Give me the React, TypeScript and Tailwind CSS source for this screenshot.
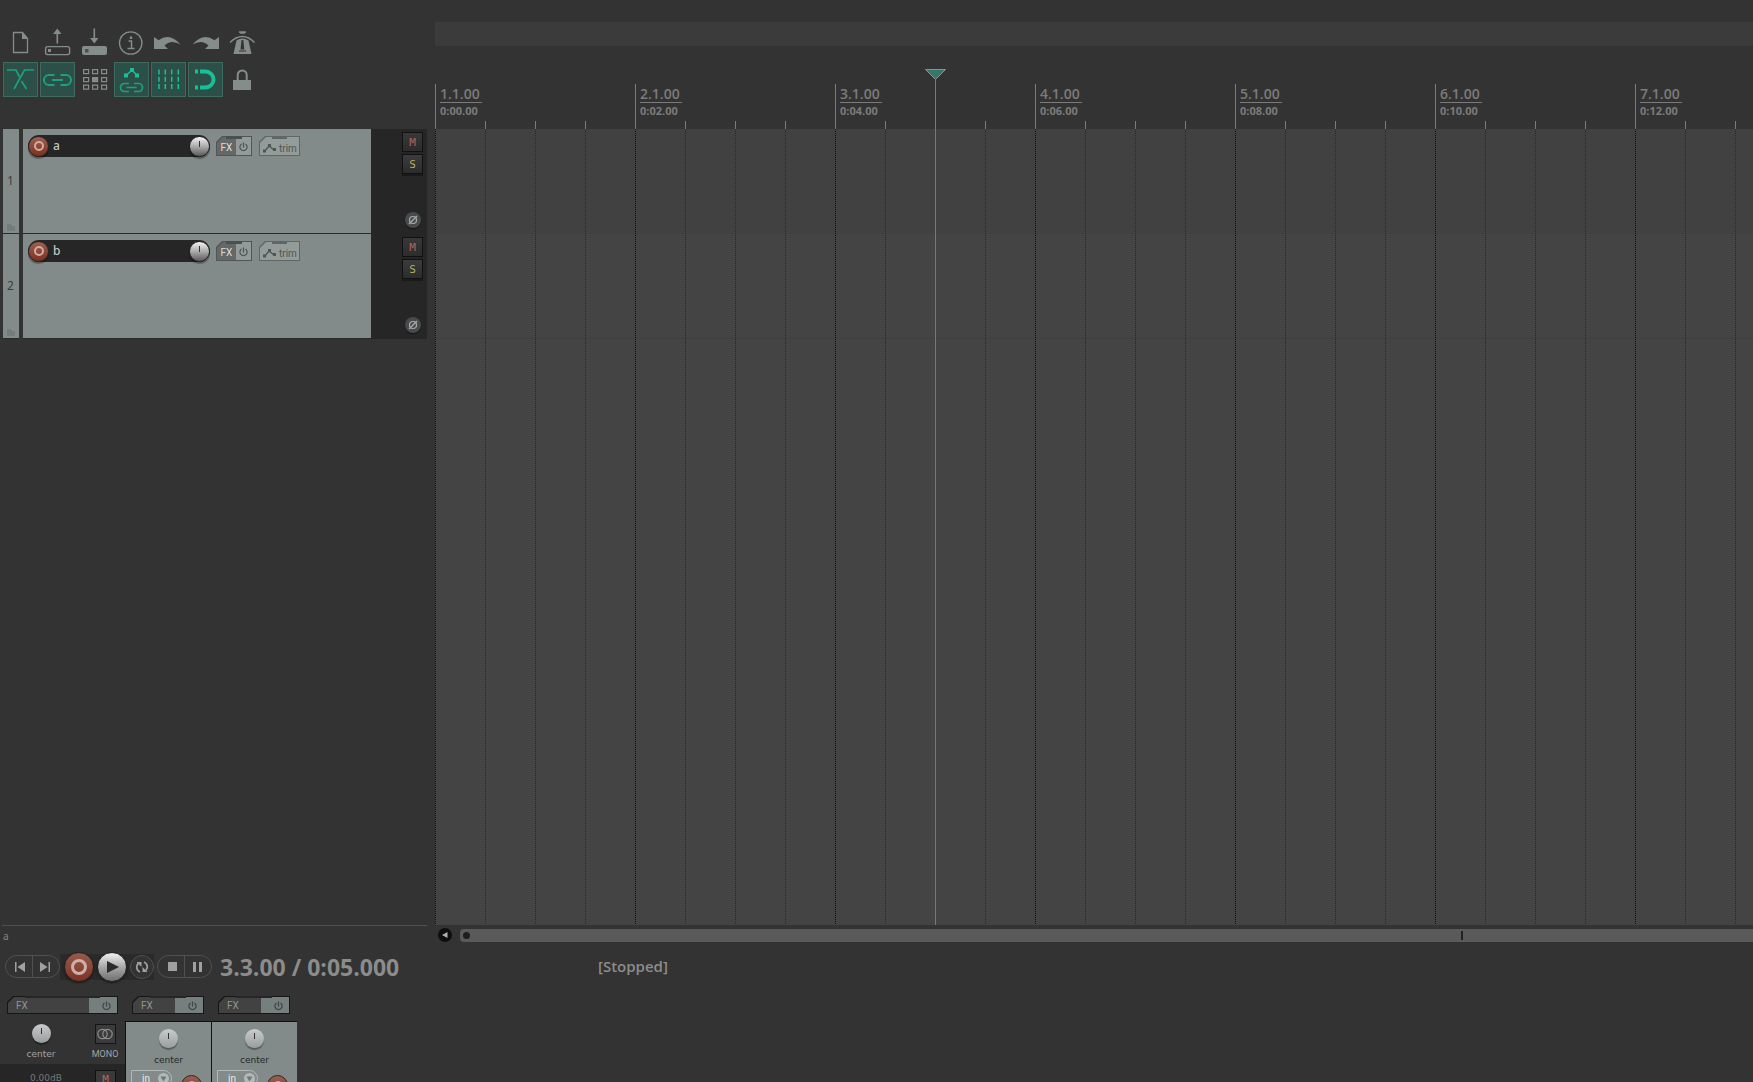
import { useState } from 'react'
import type { ReactNode } from 'react'

// ── Toolbar icons (35×35 cells) ─────────────────────────────────────────────

const ICONS: Record<string, ReactNode> = {
  new: (
    <>
      <path d="M10.500 7.500h9l5 6v14h-14z" fill="none" stroke="currentColor" strokeWidth="1.300" />
      <path d="M19 7l6 7h-6z" fill="currentColor" />
    </>
  ),
  open: (
    <>
      <path d="M17.300 3.500l4.200 5.500h-3.400v9.500h-1.600V9h-3.400z" fill="currentColor" />
      <rect x="5.600" y="21.600" width="24" height="8" rx="2" fill="none" stroke="currentColor" strokeWidth="1.400" />
      <rect x="8" y="24" width="3" height="3" fill="currentColor" />
    </>
  ),
  save: (
    <>
      <path d="M17.300 18.500l4.200-5.500h-3.400V3.500h-1.600V13h-3.400z" fill="currentColor" />
      <rect x="5" y="21" width="25" height="9" rx="2" fill="currentColor" />
      <rect x="8" y="24" width="3.500" height="3.500" fill="#4b5150" />
    </>
  ),
  info: (
    <>
      <circle cx="16.700" cy="18" r="11.200" fill="none" stroke="currentColor" strokeWidth="1.300" />
      <path d="M14.500 16h3v7.500M13.500 23.500h7" fill="none" stroke="currentColor" strokeWidth="1.500" />
      <rect x="15.800" y="11.500" width="2.400" height="2.400" fill="currentColor" />
    </>
  ),
  undo: <path d="M3 12l4.500 3.200Q19 7 29.500 19.500Q20 14 13.500 20.500L17 24H3z" fill="currentColor" />,
  redo: <path d="M31 12l-4.500 3.200Q15 7 4.500 19.500Q14 14 20.500 20.500L17 24H31z" fill="currentColor" />,
  metronome: (
    <>
      <path d="M14 6.200h7v1.200l-1.500 1.400h-4L14 7.400z" fill="currentColor" />
      <path d="M5 17.500Q11 11.500 17.300 11.500T29.500 17.500" fill="none" stroke="currentColor" strokeWidth="1.500" />
      <path d="M11.500 15.500Q17.300 11.500 23.500 15.500L26.500 29H8.500z" fill="currentColor" />
      <path d="M16.500 15h1.800l1 9.500h-3.800zM14 25.500h7v1h-7z" fill="#333" />
    </>
  ),
  crossfade: (
    <g fill="none" stroke="currentColor" strokeWidth="1.700">
      <path d="M4 8h9l3.500 7M18.500 19l5 8" />
      <path d="M31 8H21.500L11 27" />
    </g>
  ),
  link: (
    <g fill="none" stroke="currentColor" strokeWidth="1.900">
      <path d="M14.500 13H9a5 5 0 0 0 0 10h5.500M20.500 13H26a5 5 0 0 1 0 10h-5.500M12 18h11" />
    </g>
  ),
  matrix: (
    <g fill="none" stroke="currentColor" strokeWidth="1.200">
      <path d="M6.600 7.600h5v4h-5zM15.600 7.600h5v4h-5zM24.600 7.600h5v4h-5zM6.600 15.600h5v4h-5zM24.600 15.600h5v4h-5zM6.600 23.100h5v4h-5zM15.600 23.100h5v4h-5zM24.600 23.100h5v4h-5z" />
      <path d="M15.600 15.600h5v4h-5z" fill="currentColor" />
    </g>
  ),
  envelope: (
    <>
      <path d="M12 13.500L18 8l5 5.500" fill="none" stroke="#17c09a" strokeWidth="1.500" />
      <path d="M10 11.500h4v4h-4zM16 6h4v4h-4zM21 11.500h4v4h-4z" fill="#17c09a" />
      <path
        d="M15 21.500H10.500a4 4 0 0 0 0 8H15M20 21.500h4.500a4 4 0 0 1 0 8H20M12.500 25.500h10"
        fill="none"
        stroke="currentColor"
        strokeWidth="1.700"
      />
    </>
  ),
  gridLines: (
    <path
      d="M8 7.500v20M14.300 7.500v20M20.700 7.500v20M27.300 7.500v20"
      stroke="#17c09a"
      strokeWidth="1.500"
      strokeDasharray="5 2.300"
    />
  ),
  snap: (
    <>
      <path d="M12 9.500h5.500a8 8 0 0 1 0 16H12" fill="none" stroke="#17c09a" strokeWidth="3.800" />
      <path d="M7 7.600h3v3.800H7zM7 23.600h3v3.800H7z" fill="#17c09a" />
    </>
  ),
  lock: (
    <>
      <rect x="8" y="18" width="18" height="10" fill="currentColor" />
      <path d="M12.700 18v-5a4.500 4.500 0 0 1 9 0v5" fill="none" stroke="currentColor" strokeWidth="2" />
    </>
  ),
}

const TOOLS = [
  { icon: 'new', label: 'New project' },
  { icon: 'open', label: 'Open project' },
  { icon: 'save', label: 'Save project' },
  { icon: 'info', label: 'Project settings' },
  { icon: 'undo', label: 'Undo' },
  { icon: 'redo', label: 'Redo' },
  { icon: 'metronome', label: 'Metronome' },
  { icon: 'crossfade', label: 'Auto-crossfade', on: true },
  { icon: 'link', label: 'Item grouping', on: true },
  { icon: 'matrix', label: 'Ripple editing' },
  { icon: 'envelope', label: 'Move envelopes with items', on: true },
  { icon: 'gridLines', label: 'Grid lines', on: true },
  { icon: 'snap', label: 'Snap', on: true },
  { icon: 'lock', label: 'Lock' },
]

const MEASURES = [
  { bar: '1.1.00', time: '0:00.00' },
  { bar: '2.1.00', time: '0:02.00' },
  { bar: '3.1.00', time: '0:04.00' },
  { bar: '4.1.00', time: '0:06.00' },
  { bar: '5.1.00', time: '0:08.00' },
  { bar: '6.1.00', time: '0:10.00' },
  { bar: '7.1.00', time: '0:12.00' },
]

function Toolbar() {
  return (
    <div className="grid grid-cols-[repeat(7,35px)] gap-[2px] pl-[3px] pt-[25px]">
      {TOOLS.map(tool => (
        <button
          key={tool.icon}
          aria-label={tool.label}
          className={
            tool.on
              ? 'size-[35px] bg-[#2c5047] text-[#1f9f82] shadow-[inset_0_0_0_1px_#3f6a5f]'
              : 'size-[35px] text-[#858d8a]'
          }
        >
          <svg viewBox="0 0 35 35" className="block size-full">
            {ICONS[tool.icon]}
          </svg>
        </button>
      ))}
    </div>
  )
}

// ── Small controls ──────────────────────────────────────────────────────────

function RecordButton({ label }: { label: string }) {
  return (
    <button
      aria-label={label}
      className="grid size-[21px] shrink-0 place-items-center rounded-full border border-[#2a2422] bg-linear-to-b from-[#9a6152] to-[#7c3020] shadow-[0_2px_1px_#00000055]"
    >
      <span className="size-[10px] rounded-full border-2 border-[#d5aaa0]" />
    </button>
  )
}

function Knob({ label, className }: { label: string; className: string }) {
  return (
    <label className={`relative flex shrink-0 justify-center rounded-full ${className}`}>
      <span className="mt-[4px] h-[6px] w-px bg-[#333]" />
      <input type="range" min={-100} max={100} defaultValue={0} aria-label={label} className="absolute inset-0 size-full opacity-0" />
    </label>
  )
}

function PowerIcon() {
  return (
    <svg viewBox="0 0 9 10" className="h-[10px] w-[9px]" fill="none" stroke="currentColor" strokeWidth="1.200">
      <path d="M4.500 0.500v5M2.500 2a3.600 3.600 0 1 0 4 0" />
    </svg>
  )
}

function MixerFx({ wide }: { wide?: boolean }) {
  return (
    <div
      className={`relative h-[18px] shrink-0 bg-[#161616] p-px font-[Roboto] text-[10px] [clip-path:polygon(6px_0,100%_0,100%_100%,0_100%,0_6px)] ${
        wide ? 'w-[111px]' : 'w-[72px]'
      }`}
    >
      <div className="flex h-full bg-[#424242] [clip-path:polygon(6px_0,100%_0,100%_100%,0_100%,0_6px)]">
        <button className="flex-1 pl-[8px] pt-px text-left leading-[16px] text-[#8a9592]">FX</button>
        <button aria-label="FX bypass" className="grid w-[28px] place-items-center bg-[#747f7e] pl-[7px] pt-[2px] text-[#3d4443]">
          <PowerIcon />
        </button>
      </div>
      <span className="absolute inset-x-[18px] top-0 h-[2px] bg-[#262626]" />
    </div>
  )
}

// ── Track panel ─────────────────────────────────────────────────────────────

function Track({ index, name: initialName }: { index: number; name: string }) {
  const [name, setName] = useState(initialName)
  const [inverted, setInverted] = useState(false)

  return (
    <div className="flex h-[105px] pl-[3px]">
      <div className="relative mr-[4px] grid w-[16px] place-items-center border-b border-[#262a29] bg-[#828b89] pr-px font-['Noto_Sans'] text-[12px] text-[#3a3f3e]">
        {index}
        <svg viewBox="0 0 8 7" className="absolute bottom-[2px] left-[4px] h-[7px] w-[8px]">
          <path d="M0 0h4l1 2h3v5H0z" fill="#737c7a" />
        </svg>
      </div>
      <div className="flex flex-1 items-start border-b border-[#262a29] bg-[#828b89] pl-[5px] pt-[6px]">
        <div className="flex h-[22px] w-[182px] items-center rounded-full bg-[#262626]">
          <RecordButton label={`Record arm ${name}`} />
          <input
            aria-label={`Track ${index} name`}
            value={name}
            onChange={e => setName(e.target.value)}
            className="ml-[4px] w-0 flex-1 bg-transparent font-['Noto_Sans'] text-[12px] font-medium leading-[20px] text-[#c4c4c4] outline-none"
          />
          <Knob
            label={`Volume ${name}`}
            className="size-[21px] border border-[#262626] bg-linear-to-b from-[#f4f4f4] via-[#aaaaaa] to-[#5c5c5c] shadow-[0_2px_1px_#00000055]"
          />
        </div>
        <div className="relative ml-[6px] mt-px h-[20px] w-[36px] bg-[#505655] p-px font-[Roboto] text-[10px] [clip-path:polygon(6px_0,100%_0,100%_100%,0_100%,0_6px)]">
          <div className="flex h-full [clip-path:polygon(6px_0,100%_0,100%_100%,0_100%,0_6px)]">
            <button className="w-[19px] bg-[#656867] pt-[3px] text-[#dddddd]">FX</button>
            <button aria-label="FX bypass" className="grid flex-1 place-items-center bg-[#939b99] pt-[2px] text-[#4d5352]">
              <PowerIcon />
            </button>
          </div>
          <span className="absolute inset-x-[10px] top-0 h-[3px] bg-[#4b4f4e]" />
        </div>
        <div className="relative ml-[7px] mt-px h-[20px] w-[41px] bg-[#5f6664] p-px font-[Roboto] text-[10px] [clip-path:polygon(6px_0,100%_0,100%_100%,0_100%,0_6px)]">
          <button className="flex h-full w-full items-center gap-[3px] bg-[#949c9a] pl-[3px] pt-[4px] text-[#4f5554] [clip-path:polygon(6px_0,100%_0,100%_100%,0_100%,0_6px)]">
            <svg viewBox="0 0 13 9" className="h-[9px] w-[13px] shrink-0">
              <path d="M2 7L6 2l5 4" fill="none" stroke="currentColor" strokeWidth="1.300" />
              <path d="M0 5.500h3v3H0zM5 0h3v3H5zM10 4h3v3h-3z" fill="currentColor" />
            </svg>
            trim
          </button>
          <span className="absolute inset-x-[13px] top-0 h-[3px] bg-[#5f6664]" />
        </div>
      </div>
      <div className="flex w-[56px] flex-col items-end bg-[#262626] pr-[4px] pt-[3px]">
        <button className="h-[20px] w-[21px] border border-[#111] bg-linear-to-b from-[#383838] to-[#2c2c2c] pt-px font-['DejaVu_Sans_Mono'] text-[11px] leading-[18px] text-[#b0645f]">
          M
        </button>
        <button className="mt-[2px] h-[20px] w-[21px] border border-[#111] bg-linear-to-b from-[#3c3c3c] to-[#2c2c2c] pt-px font-['DejaVu_Sans_Mono'] text-[11px] leading-[18px] text-[#b5b160] shadow-[0_2px_0_#1a1a1a]">
          S
        </button>
        <button
          aria-label={`Invert phase ${name}`}
          aria-pressed={inverted}
          onClick={() => setInverted(!inverted)}
          className="mr-[2px] mt-[38px] grid size-[16px] place-items-center rounded-full bg-[#474b4b] text-[#a8abab] shadow-[0_1px_1px_#151515]"
        >
          <svg viewBox="0 0 10 10" className="size-[10px]" fill="none" stroke="currentColor" strokeWidth="1.200">
            <circle cx="5" cy="5" r="3.500" />
            <path d="M1 9L9 1" />
          </svg>
        </button>
      </div>
    </div>
  )
}

// ── Timeline ────────────────────────────────────────────────────────────────

function Timeline() {
  return (
    <section className="relative flex min-w-0 flex-1 flex-col overflow-hidden">
      <div className="mt-[22px] h-[24px] shrink-0 bg-[#3b3b3b]" />
      <div className="mt-[38px] flex h-[45px] shrink-0 overflow-hidden font-['Open_Sans'] font-semibold text-[#7b7b7b]">
        {MEASURES.map(m => (
          <div key={m.bar} className="relative w-[200px] shrink-0 border-l border-[#7b7b7b] pl-[4px]">
            <div className="w-[42px] border-b border-[#7b7b7b] pt-px text-[14px] leading-[17px]">{m.bar}</div>
            <div className="text-[11px] font-bold leading-[15px]">{m.time}</div>
            <span className="absolute bottom-0 left-[49px] h-[8px] w-[51px] border-x border-[#7b7b7b]" />
            <span className="absolute bottom-0 left-[149px] h-[8px] w-px bg-[#7b7b7b]" />
          </div>
        ))}
      </div>
      <div className="relative flex-1 bg-[#444444]">
        <div className="h-[105px] border-b border-[#404040] bg-[#414141]" />
        <div className="h-[105px] border-b border-[#404040]" />
        <div className="absolute inset-0 flex overflow-hidden">
          {MEASURES.map(m => (
            <div key={m.bar} className="grid w-[200px] shrink-0 grid-cols-4">
              <span className="w-px bg-[repeating-linear-gradient(to_bottom,#0e0e0e_0_1px,transparent_1px_2px)]" />
              <span className="w-px bg-[repeating-linear-gradient(to_bottom,#282828_0_1px,transparent_1px_2px)]" />
              <span className="w-px bg-[repeating-linear-gradient(to_bottom,#282828_0_1px,transparent_1px_2px)]" />
              <span className="w-px bg-[repeating-linear-gradient(to_bottom,#282828_0_1px,transparent_1px_2px)]" />
            </div>
          ))}
        </div>
      </div>

      {/* Play cursor */}
      <div className="absolute bottom-0 left-[490px] top-[69px] flex w-[21px] flex-col items-center">
        <svg viewBox="0 0 21 11" className="h-[11px] w-[21px] shrink-0">
          <path d="M0.500 0.500h20L10.500 10.500z" fill="#35786b" stroke="#8a9390" />
        </svg>
        <span className="w-px flex-1 bg-[#3d9482]" />
      </div>
    </section>
  )
}

function Transport() {
  const left = 'grid h-[23px] w-[28px] place-items-center rounded-l-full border border-[#505050] pl-[2px] text-[#a0a0a0]'
  const right = '-ml-px grid h-[23px] w-[28px] place-items-center rounded-r-full border border-[#505050] pr-[2px] text-[#a0a0a0]'
  return (
    <div className="flex h-[45px] shrink-0 items-center pb-[2px] pl-[5px] font-['Open_Sans'] text-[#8c8c8c]">
      <div className="flex items-center">
        <button aria-label="Go to start" className={left}>
          <svg viewBox="0 0 10 10" className="size-[10px]" fill="currentColor">
            <path d="M0 0h1.500v10H0zM10 0v10L2.500 5z" />
          </svg>
        </button>
        <button aria-label="Go to end" className={right}>
          <svg viewBox="0 0 10 10" className="size-[10px]" fill="currentColor">
            <path d="M8.500 0H10v10H8.500zM0 0v10l7.500-5z" />
          </svg>
        </button>
        <div className="flex h-[26px] items-center bg-[#2a2a2a]">
          <button
            aria-label="Record"
            className="ml-[4px] grid size-[30px] place-items-center rounded-full border border-[#222] bg-linear-to-b from-[#955a4c] to-[#803222] shadow-[0_1px_2px_#151515]"
          >
            <span className="size-[16px] rounded-full border-[3px] border-[#cbb1aa]" />
          </button>
          <button
            aria-label="Play"
            className="ml-[3px] grid size-[30px] place-items-center rounded-full border border-[#222] bg-linear-to-b from-[#f2f2f2] via-[#a8a8a8] to-[#707070] shadow-[0_1px_2px_#151515]"
          >
            <svg viewBox="0 0 12 12" className="ml-[2px] size-[12px]">
              <path d="M0 0l12 6-12 6z" fill="#2b2b2b" />
            </svg>
          </button>
          <button
            aria-label="Repeat"
            className="ml-[3px] grid size-[24px] place-items-center rounded-full border border-[#505050] bg-[#333] text-[#a0a0a0]"
          >
            <svg viewBox="0 0 14 14" className="size-[14px]" fill="none" stroke="currentColor" strokeWidth="1.800">
              <path d="M5 12A5.200 5.200 0 0 1 3.200 3.500M9 2a5.200 5.200 0 0 1 1.800 8.500" />
              <path d="M1.500 2h5v5zM12.500 12h-5V7z" fill="currentColor" stroke="none" />
            </svg>
          </button>
        </div>
        <button aria-label="Stop" className={`ml-[3px] ${left}`}>
          <span className="size-[9px] bg-[#a0a0a0]" />
        </button>
        <button aria-label="Pause" className={right}>
          <span className="h-[10px] w-[9px] border-x-[3px] border-[#a0a0a0]" />
        </button>
      </div>
      <div className="ml-[8px] w-[378px] text-[23px] font-bold leading-[30px]">3.3.00 / 0:05.000</div>
      <div className="text-[15px] font-semibold">[Stopped]</div>
    </div>
  )
}

// ── Mixer ───────────────────────────────────────────────────────────────────

const MIXER_KNOB = 'size-[19px] bg-linear-to-b from-[#c9cccc] to-[#999d9d] shadow-[0_2px_1px_#00000055]'

function MasterStrip() {
  return (
    <div className="flex w-[125px] shrink-0 flex-col">
      <div className="pl-[7px] pt-[6px]">
        <MixerFx wide />
      </div>
      <div className="mt-[10px] flex h-[40px] shrink-0 font-['DejaVu_Sans'] text-[9px] leading-[12px] text-[#a3a3a3]">
        <div className="flex w-[82px] flex-col items-center">
          <Knob label="Master pan" className={MIXER_KNOB} />
          <span className="mt-[5px]">center</span>
        </div>
        <div className="flex w-[43px] flex-col items-center pl-[3px]">
          <button aria-label="Mono" className="grid h-[20px] w-[21px] place-items-center border border-[#151515] bg-[#3b3b3b] text-[#8e8e8e]">
            <svg viewBox="0 0 16 12" className="h-[12px] w-[16px]" fill="none" stroke="currentColor" strokeWidth="1.200">
              <circle cx="5.500" cy="6" r="4.700" />
              <circle cx="10.500" cy="6" r="4.700" />
            </svg>
          </button>
          <span className="mt-[4px] font-[Roboto] text-[9px]">MONO</span>
        </div>
      </div>
      <div className="flex flex-1 items-start bg-[#262626] pt-[6px] font-['DejaVu_Sans'] text-[9px] text-[#777]">
        <span className="w-[95px] shrink-0 pl-[30px] pt-[2px] leading-[12px]">0.00dB</span>
        <button className="h-[20px] w-[21px] shrink-0 border border-[#111] bg-[#3a3a3a] font-['DejaVu_Sans_Mono'] text-[11px] leading-[18px] text-[#b0645f]">
          M
        </button>
      </div>
    </div>
  )
}

function ChannelStrip({ name }: { name: string }) {
  return (
    <div className="flex w-[86px] shrink-0 flex-col">
      <div className="pl-[7px] pt-[6px]">
        <MixerFx />
      </div>
      <div className="mt-[7px] flex flex-1 flex-col items-center border-l border-t border-[#111] bg-[#828b89] pt-[7px] font-['DejaVu_Sans'] text-[9px] leading-[12px] text-[#222827]">
        <Knob label={`Pan ${name}`} className={MIXER_KNOB} />
        <span className="mt-[6px]">center</span>
        <div className="mt-[4px] flex w-full shrink-0 pl-[5px]">
          <div className="relative h-[17px] w-[41px] rounded-r-full border border-[#b3b9b8]">
            <select
              aria-label={`Input ${name}`}
              className="w-full appearance-none bg-transparent pl-[10px] font-[Roboto] text-[10px] leading-[15px] text-[#e6e9e8]"
            >
              <option>in</option>
            </select>
            <svg viewBox="0 0 11 11" className="pointer-events-none absolute right-[2px] top-[2px] size-[11px]">
              <circle cx="5.500" cy="5.500" r="5.500" fill="#b3b9b8" />
              <path d="M2.500 3.500h6l-3 5z" fill="#6f7876" />
            </svg>
          </div>
          <div className="ml-[9px] mt-[5px]">
            <RecordButton label={`Record arm ${name} in mixer`} />
          </div>
        </div>
      </div>
    </div>
  )
}

export default function App() {
  return (
    <main className="flex h-screen flex-col overflow-hidden bg-[#333333]">
      <div className="flex min-h-0 flex-1">
        <aside className="mr-[8px] flex w-[427px] shrink-0 flex-col">
          <div className="h-[129px] shrink-0">
            <Toolbar />
          </div>
          <Track index={1} name="a" />
          <Track index={2} name="b" />
        </aside>
        <Timeline />
      </div>

      {/* Status line + horizontal scrollbar */}
      <div className="flex h-[20px] shrink-0">
        <div className="ml-[2px] mr-[11px] w-[425px] border-t border-[#505050] pl-px pt-[3px] font-['Noto_Sans'] text-[10px] leading-[14px] text-[#858585]">
          a
        </div>
        <button aria-label="Scroll left" className="mt-[3px] grid size-[14px] place-items-center rounded-full bg-[#0e0e0e]">
          <svg viewBox="0 0 6 6" className="size-[6px]">
            <path d="M5.500 0v6L0 3z" fill="#b0b0b0" />
          </svg>
        </button>
        <div className="ml-[8px] mt-[4px] flex h-[13px] flex-1 items-center rounded-l-[4px] bg-[#5a5a5a] pl-[3px]">
          <span className="size-[7px] rounded-full bg-[#1e1e1e]" />
          <span className="ml-auto mr-[290px] h-[9px] w-[2px] bg-[#222]" />
        </div>
      </div>

      <Transport />

      <div className="flex h-[92px] shrink-0 overflow-hidden">
        <MasterStrip />
        <ChannelStrip name="a" />
        <ChannelStrip name="b" />
      </div>
    </main>
  )
}
